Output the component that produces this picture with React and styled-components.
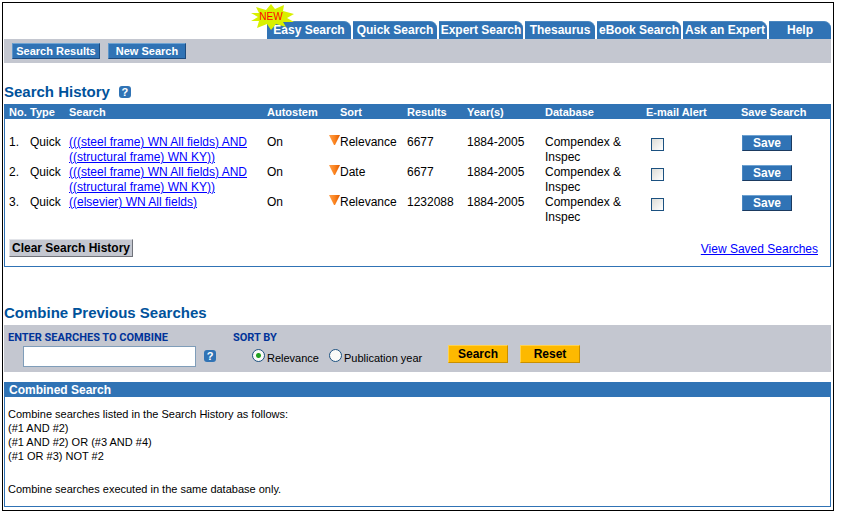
import React from "react";
import styled, { createGlobalStyle } from "styled-components";

const BLUE = "#3073b5";
const GREY = "#c4c7d0";
const SANS = '"Liberation Sans", Arial, sans-serif';

const GlobalStyle = createGlobalStyle`
  * { box-sizing: border-box; }
  body { margin: 0; background: #fff; color: #000; font: 12px/15px ${SANS}; }
  button, input { font-family: inherit; margin: 0; }
`;

const Frame = styled.div`
  margin: 2px 9px 3px 2px;
  padding: 1px 2px 3px 1px;
  border: 1px solid #000;
`;

const Tabs = styled.nav`
  display: flex;
  justify-content: flex-end;
  gap: 2px;
  padding-top: 17px;
`;

const Tab = styled.a`
  position: relative;
  flex: 0 0 ${(p) => p.$width || 84}px;
  height: 18px;
  border-top: 1px solid #4b87c0;
  border-top-right-radius: 7px;
  background: ${BLUE};
  color: #fff;
  font-weight: bold;
  line-height: 17px;
  text-align: center;
  text-decoration: none;
  white-space: nowrap;
`;

const Burst = styled.svg`
  position: absolute;
  left: -16px;
  top: -18px;
  width: 43px;
  height: 26px;
  font-weight: normal;
`;

const Toolbar = styled.div`
  display: flex;
  gap: 8px;
  height: 24px;
  padding: 4px 8px;
  background: ${GREY};
`;

const BlueButton = styled.button`
  width: ${(p) => p.$width}px;
  height: 16px;
  padding: 0;
  border: 1px solid;
  border-color: #6fa3d2 #1d4a7d #1d4a7d #5c95ca;
  background: ${BLUE};
  color: #fff;
  font-size: ${(p) => p.$size || 11}px;
  font-weight: bold;
  line-height: 14px;
`;

const SaveButton = styled(BlueButton)`
  display: block;
  margin-left: 1px;
  border-color: #6fa3d2 #1b3a60 #1b3a60 #4b87c0;
`;

const Heading = styled.h2`
  display: flex;
  align-items: center;
  gap: 9px;
  margin: ${(p) => p.$top}px 0 ${(p) => p.$bottom}px;
  color: #00529b;
  font-size: 15px;
  line-height: 18px;
`;

const HelpButton = styled.button`
  width: 12px;
  height: 12px;
  padding: 0;
  border: 0;
  border-radius: 3px;
  background: ${BLUE};
  color: #fff;
  font-size: 11px;
  font-weight: bold;
  line-height: 12px;
  text-align: center;
`;

const Panel = styled.section`
  border: 1px solid ${BLUE};
`;

const HistoryTable = styled.table`
  width: 100%;
  table-layout: fixed;
  border-collapse: collapse;

  th, td { padding: 0; text-align: left; vertical-align: top; }
  th { height: 14px; background: ${BLUE}; color: #fff; font-size: 11px; line-height: 14px; white-space: nowrap; }
  th:first-child, td:first-child { padding-left: 4px; }
  tbody::before { content: ""; display: table-row; height: 16px; }
  td { height: 30px; }
`;

const SortHeader = styled.th`
  && { padding-left: 11px; }
`;

const SortCell = styled.div`
  display: flex;
`;

const Arrow = styled.svg`
  width: 11px;
  height: 11px;
`;

const Link = styled.a`
  color: #00f;
  text-decoration: underline;
`;

const CheckBox = styled.input`
  appearance: none;
  display: block;
  width: 13px;
  height: 13px;
  margin: 3px 0 0 5px;
  border: 1px solid #1c5180;
  background: linear-gradient(135deg, #dcdcd7, #fff);
  &:checked { background: #21a121; }
`;

const PanelFooter = styled.div`
  display: flex;
  justify-content: space-between;
  padding: 14px 12px 9px 4px;
`;

const ClearButton = styled.button`
  width: 124px;
  height: 18px;
  padding: 0;
  border: 1px solid;
  border-color: #e2e4e9 #70737b #70737b #e2e4e9;
  background: ${GREY};
  color: #000;
  font-size: 12px;
  font-weight: bold;
  line-height: 16px;
  white-space: nowrap;
`;

const SavedLink = styled(Link)`
  margin-top: 3px;
`;

const CombineBar = styled.form`
  display: flex;
  height: 47px;
  background: ${GREY};
`;

const Field = styled.div`
  width: ${(p) => p.$width}px;
  padding: 5px 0 0 4px;
`;

const FieldTitle = styled.label`
  display: block;
  color: #003399;
  font: bold 11px/15px Roboto, sans-serif;
  white-space: nowrap;
`;

const FieldRow = styled.div`
  display: flex;
  align-items: center;
  gap: ${(p) => p.$gap}px;
  padding-left: ${(p) => p.$left}px;
`;

const TextBox = styled.input`
  width: 173px;
  height: 21px;
  margin-top: 1px;
  padding: 2px;
  border: 1px solid #7f9db9;
  background: #fff;
`;

const RadioLabel = styled.label`
  display: flex;
  align-items: flex-end;
  gap: 2px;
  margin-top: 4px;
  height: 16px;
  font-size: 11px;
  line-height: 14px;
  white-space: nowrap;
`;

const Radio = styled.input`
  appearance: none;
  width: 13px;
  height: 13px;
  align-self: flex-start;
  border: 1px solid #1c5180;
  border-radius: 50%;
  background: #fafaf8;
  &:checked { background: radial-gradient(circle, #21a121 2px, #fafaf8 3px); }
`;

const Actions = styled.div`
  display: flex;
  gap: 12px;
  padding-top: 20px;
`;

const GoldButton = styled.button`
  width: 60px;
  height: 18px;
  padding: 0;
  border: 1px solid;
  border-color: #ffd24d #c98f00 #c98f00 #ffd24d;
  background: #fdb900;
  color: #000;
  font-size: 12px;
  font-weight: bold;
  line-height: 16px;
`;

const CombinedPanel = styled(Panel)`
  margin-top: 10px;
  padding-bottom: 10px;
  font-size: 11px;
  line-height: 14px;
`;

const PanelTitle = styled.h3`
  margin: 0;
  padding-left: 4px;
  background: ${BLUE};
  color: #fff;
  font-size: 12px;
  line-height: 14px;
`;

const Note = styled.p`
  margin: ${(p) => p.$top}px 3px 0;
`;

const tabs = [
  { label: "Easy Search", isNew: true },
  { label: "Quick Search" },
  { label: "Expert Search" },
  { label: "Thesaurus", width: 70 },
  { label: "eBook Search" },
  { label: "Ask an Expert" },
  { label: "Help", width: 62 },
];

const columns = [25, 39, 198, 62, 78, 60, 78, 101, 95, 0];

const steel = "(((steel frame) WN All fields) AND ((structural frame) WN KY))";
const searches = [
  { query: steel, sort: "Relevance", results: 6677 },
  { query: steel, sort: "Date", results: 6677 },
  { query: "((elsevier) WN All fields)", sort: "Relevance", results: 1232088 },
];

const NewBurst = () => (
  <Burst viewBox="0 0 43 26">
    <polygon
      points="0,9 8,9 5,3 15,6 20,0 24,5 33,1 32,7 43,10 36,14 43,18 32,18 35,23 25,20 20,26 16,20 6,24 8,17 0,17 7,13"
      fill="#d8f000"
    />
    <text x="20" y="16" textAnchor="middle" fontSize="10" fill="#f00">NEW</text>
  </Burst>
);

const SortArrow = () => (
  <Arrow viewBox="0 0 11 11" aria-hidden="true">
    <defs>
      <linearGradient id="arrow" x1="0" y1="0" x2="1" y2="0">
        <stop offset="0" stopColor="#ffa04c" />
        <stop offset="0.5" stopColor="#fb8420" />
        <stop offset="1" stopColor="#e05a00" />
      </linearGradient>
    </defs>
    <polygon points="0,0 11,0 6,10 5,10" fill="url(#arrow)" />
  </Arrow>
);

export default function App() {
  return (
    <>
      <GlobalStyle />
      <Frame>
        <Tabs>
          {tabs.map((t) => (
            <Tab key={t.label} href="#" $width={t.width}>
              {t.label}
              {t.isNew && <NewBurst />}
            </Tab>
          ))}
        </Tabs>
        <Toolbar>
          <BlueButton $width={88}>Search Results</BlueButton>
          <BlueButton $width={78}>New Search</BlueButton>
        </Toolbar>

        <Heading $top={20} $bottom={3}>
          Search History
          <HelpButton aria-label="Help with search history">?</HelpButton>
        </Heading>
        <Panel>
          <HistoryTable>
            <colgroup>
              {columns.map((w, i) => (
                <col key={i} width={w || undefined} />
              ))}
            </colgroup>
            <thead>
              <tr>
                <th>No.</th>
                <th>Type</th>
                <th>Search</th>
                <th>Autostem</th>
                <SortHeader>Sort</SortHeader>
                <th>Results</th>
                <th>Year(s)</th>
                <th>Database</th>
                <th>E-mail Alert</th>
                <th>Save Search</th>
              </tr>
            </thead>
            <tbody>
              {searches.map((s, i) => (
                <tr key={i}>
                  <td>{i + 1}.</td>
                  <td>Quick</td>
                  <td><Link href="#">{s.query}</Link></td>
                  <td>On</td>
                  <td><SortCell><SortArrow />{s.sort}</SortCell></td>
                  <td>{s.results}</td>
                  <td>1884-2005</td>
                  <td>Compendex &amp;<br />Inspec</td>
                  <td><CheckBox type="checkbox" aria-label={`E-mail alert for search ${i + 1}`} /></td>
                  <td><SaveButton $width={50} $size={12}>Save</SaveButton></td>
                </tr>
              ))}
            </tbody>
          </HistoryTable>
          <PanelFooter>
            <ClearButton>Clear Search History</ClearButton>
            <SavedLink href="#">View Saved Searches</SavedLink>
          </PanelFooter>
        </Panel>

        <Heading $top={37} $bottom={3}>Combine Previous Searches</Heading>
        <CombineBar onSubmit={(e) => e.preventDefault()}>
          <Field $width={225}>
            <FieldTitle htmlFor="combine">ENTER SEARCHES TO COMBINE</FieldTitle>
            <FieldRow $left={15} $gap={8}>
              <TextBox id="combine" type="text" />
              <HelpButton type="button" aria-label="Help with combining searches">?</HelpButton>
            </FieldRow>
          </Field>
          <Field $width={219} role="radiogroup" aria-labelledby="sort-by">
            <FieldTitle as="div" id="sort-by">SORT BY</FieldTitle>
            <FieldRow $left={19} $gap={10}>
              <RadioLabel><Radio type="radio" name="sort" defaultChecked />Relevance</RadioLabel>
              <RadioLabel><Radio type="radio" name="sort" />Publication year</RadioLabel>
            </FieldRow>
          </Field>
          <Actions>
            <GoldButton type="submit">Search</GoldButton>
            <GoldButton type="reset">Reset</GoldButton>
          </Actions>
        </CombineBar>

        <CombinedPanel>
          <PanelTitle>Combined Search</PanelTitle>
          <Note $top={10}>
            Combine searches listed in the Search History as follows:<br />
            (#1 AND #2)<br />
            (#1 AND #2) OR (#3 AND #4)<br />
            (#1 OR #3) NOT #2
          </Note>
          <Note $top={19}>Combine searches executed in the same database only.</Note>
        </CombinedPanel>
      </Frame>
    </>
  );
}
